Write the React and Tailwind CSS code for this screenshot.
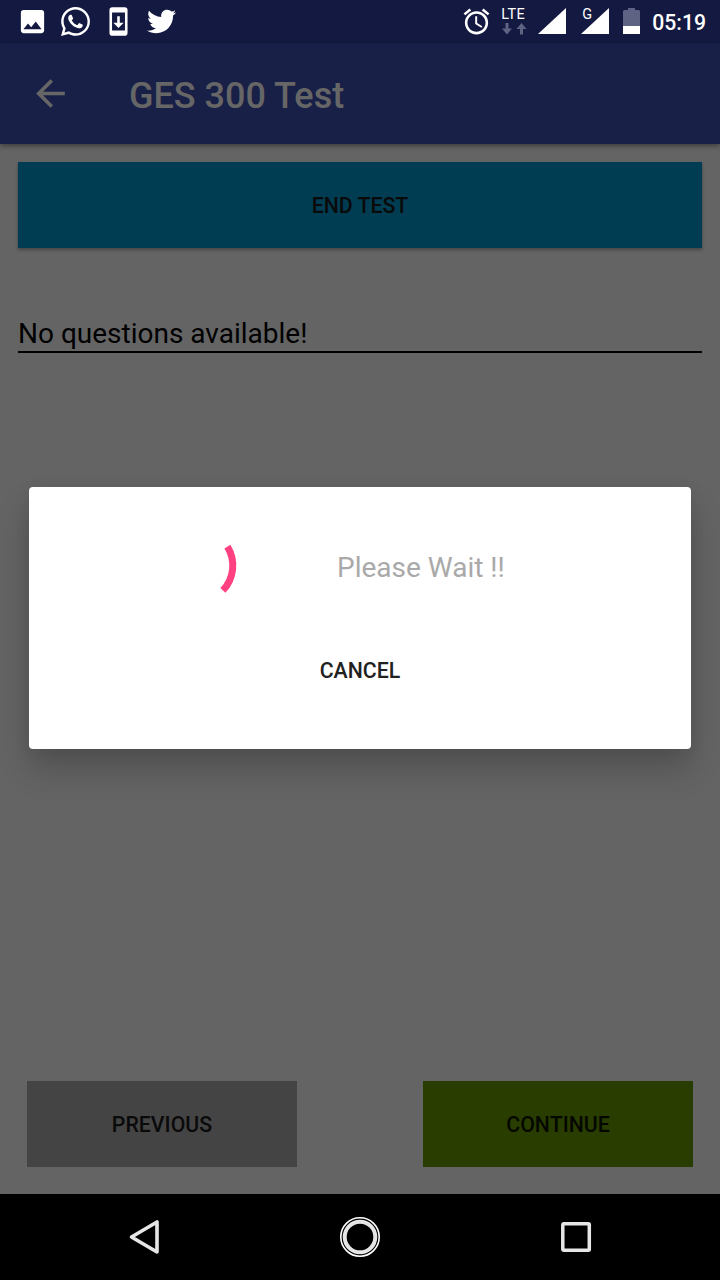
import { MdImage, MdSystemUpdate, MdAccessAlarm, MdArrowBack } from "react-icons/md";
import { FaWhatsapp, FaTwitter } from "react-icons/fa";

function StatusBar() {
  return (
    <header className="flex h-[43px] shrink-0 justify-between bg-[#141941] text-white">
      <div className="flex h-[43px] items-center pl-[17px]">
        <MdImage className="size-[31px]" />
        <FaWhatsapp className="ml-[11px] size-[33px]" />
        <MdSystemUpdate className="ml-[11px] size-[31px]" />
        <FaTwitter className="ml-[13px] size-[29px]" />
      </div>
      <div className="flex items-start pr-[14px]">
        <MdAccessAlarm className="mt-[6px] size-[31px]" />
        <div className="ml-[9px] mt-[8px] flex w-[27px] flex-col">
          <span className="text-[14.5px] leading-[14px] tracking-[0.4px]">LTE</span>
          <svg viewBox="0 0 26 12" className="mt-[1px] h-3 w-[26px] fill-[#5e6283]">
            <path d="M4.500 0h3v5.500h3.500L6 11.500 1 5.500h3.500zM19 11.500V6h-3.500L20.500 0l5 6H22v5.500z" />
          </svg>
        </div>
        <svg viewBox="0 0 28 26" className="ml-[10px] mt-2 h-[26px] w-7 fill-white">
          <path d="M28 0v26H0z" />
        </svg>
        <div className="relative ml-[15px] mt-2 h-[26px] w-7">
          <svg viewBox="0 0 28 26" className="h-[26px] w-7 fill-white">
            <path d="M28 0v26H0z" />
          </svg>
          <span className="absolute left-[1px] top-[-2px] text-[14.5px] leading-[17px]">G</span>
        </div>
        <svg viewBox="0 0 17 26" className="ml-[14px] mt-2 h-[26px] w-[17px]">
          <path d="M5 0h7v2h4l1 1v15H0V3l1-1h4z" fill="#5e6283" />
          <path d="M0 18h17v8H0z" fill="#fff" />
        </svg>
        <span className="ml-[12px] mt-[10px] text-[21.2px] font-medium leading-[25px]">05:19</span>
      </div>
    </header>
  );
}

function AppBar() {
  return (
    <div className="relative flex h-[101px] shrink-0 items-center bg-[#192048] pl-[29px] text-[#666] shadow-[0_2px_5px_rgba(0,0,0,0.4)]">
      <MdArrowBack className="size-[43px]" />
      <h1 className="ml-[57px] mt-[4px] text-[36px] font-medium leading-[42px]">GES 300 Test</h1>
    </div>
  );
}

function WaitDialog() {
  return (
    <div className="absolute inset-0 flex items-start justify-center pt-[487px]">
      <div
        role="dialog"
        className="flex h-[262px] w-[662px] flex-col items-center rounded-[4px] bg-white shadow-[0_20px_32px_rgba(0,0,0,0.2),0_0_16px_rgba(0,0,0,0.06)]"
      >
        <div className="flex h-[160px] w-full items-center">
          <svg viewBox="0 0 68 68" className="ml-[143px] size-[68px]" fill="none">
            <path d="M55 13.300A36 36 0 0 1 50.500 57" stroke="#ff4081" strokeWidth="7" transform="translate(0.4 0.4)" />
          </svg>
          <span className="ml-[97px] mt-[2px] text-[28px] leading-[34px] text-[#a9a9a9]">Please Wait !!</span>
        </div>
        <button className="mt-[11px] text-[21.3px] font-medium leading-[25px] text-[#212121]">CANCEL</button>
      </div>
    </div>
  );
}

function NavBar() {
  return (
    <nav className="flex h-[86px] shrink-0 items-center justify-between bg-black pl-[127px] pr-[127px]">
      <svg viewBox="0 0 36 40" className="h-10 w-[36px]" fill="none" stroke="#e6e6e6" strokeWidth="3.600" strokeLinejoin="round">
        <path d="M30 5v30L4.500 20z" />
      </svg>
      <svg viewBox="0 0 40 40" className="mr-[2px] size-10" fill="none">
        <circle cx="20" cy="20" r="19.200" stroke="#fff" strokeWidth="1.600" />
        <circle cx="20" cy="20" r="15.300" stroke="#e6e6e6" strokeWidth="4" />
      </svg>
      <svg viewBox="0 0 34 34" className="size-[34px]" fill="none" stroke="#e6e6e6" strokeWidth="3.500">
        <rect x="3.800" y="3.800" width="26.500" height="26.500" rx="1" />
      </svg>
    </nav>
  );
}

export default function App() {
  return (
    <div className="relative flex h-[1280px] w-[720px] flex-col overflow-hidden bg-[#646464] font-['Roboto',sans-serif]">
      <StatusBar />
      <AppBar />
      <main className="flex flex-1 flex-col pt-[18px]">
        <button className="mx-[18px] h-[86px] bg-[#003d52] pt-[1px] text-[21.3px] font-medium text-[#0a0a0a] shadow-[0_2px_3px_rgba(0,0,0,0.3)]">
          END TEST
        </button>
        <div className="mx-[18px] mt-[69px] flex h-[36px] items-start border-b-2 border-black text-[28px] leading-[34px] text-black">
          No questions available!
        </div>
        <div className="mb-[27px] mt-auto flex justify-between px-[27px]">
          <button className="h-[86px] w-[270px] bg-[#444] pt-[1px] text-[21.3px] font-medium text-[#0a0a0a]">PREVIOUS</button>
          <button className="h-[86px] w-[270px] bg-[#293d00] pt-[1px] text-[21.3px] font-medium text-[#050800]">CONTINUE</button>
        </div>
      </main>
      <NavBar />
      <WaitDialog />
    </div>
  );
}
